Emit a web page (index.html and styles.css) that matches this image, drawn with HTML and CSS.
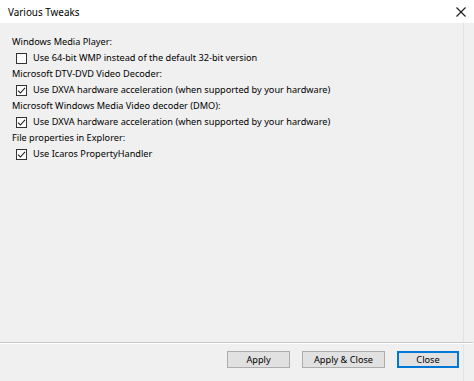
FILE: index.html
```html
<!DOCTYPE html>
<html>
<head>
<meta charset="utf-8">
<link rel="stylesheet" href="styles.css">
</head>
<body>
<div class="window">
  <div class="titlebar">
    <span class="title">Various Tweaks</span>
    <svg class="close-x" width="10" height="10" viewBox="0 0 10 10"><path d="M0.5 0.5 L9.5 9.5 M9.5 0.5 L0.5 9.5" stroke="#1a1a1a" stroke-width="1.1" fill="none"/></svg>
  </div>
  <div class="body">
    <div class="content">
      <div class="group-label">Windows Media Player:</div>
      <div class="check-row"><span class="box"></span><span>Use 64-bit WMP instead of the default 32-bit version</span></div>
      <div class="group-label">Microsoft DTV-DVD Video Decoder:</div>
      <div class="check-row"><span class="box checked"><svg width="9" height="9" viewBox="0 0 9 9"><path d="M1 4.6 L3.4 7 L8 1.8" stroke="#222" stroke-width="1.1" fill="none"/></svg></span><span>Use DXVA hardware acceleration (when supported by your hardware)</span></div>
      <div class="group-label">Microsoft Windows Media Video decoder (DMO):</div>
      <div class="check-row"><span class="box checked"><svg width="9" height="9" viewBox="0 0 9 9"><path d="M1 4.6 L3.4 7 L8 1.8" stroke="#222" stroke-width="1.1" fill="none"/></svg></span><span>Use DXVA hardware acceleration (when supported by your hardware)</span></div>
      <div class="group-label">File properties in Explorer:</div>
      <div class="check-row"><span class="box checked"><svg width="9" height="9" viewBox="0 0 9 9"><path d="M1 4.6 L3.4 7 L8 1.8" stroke="#222" stroke-width="1.1" fill="none"/></svg></span><span>Use Icaros PropertyHandler</span></div>
    </div>
    <div class="footer">
      <button class="btn btn-apply">Apply</button>
      <button class="btn btn-applyclose">Apply &amp; Close</button>
      <button class="btn btn-close default">Close</button>
    </div>
  </div>
</div>
</body>
</html>
```

FILE: styles.css
```css
html, body {
  margin: 0;
  padding: 0;
  height: 100%;
}
body {
  background: #f0f0f0;
  font-family: "Noto Sans", "Open Sans", sans-serif;
  font-size: 9.2px;
  color: #000;
}
.window {
  display: flex;
  flex-direction: column;
  height: 381px;
}
.titlebar {
  height: 23px;
  background: #fff;
  display: flex;
  align-items: center;
  justify-content: space-between;
  padding: 0 8px 0 8px;
  flex: none;
}
.title {
  font-size: 9.9px;
  color: #000;
}
.body {
  flex: 1;
  display: flex;
  flex-direction: column;
  border-right: 1px solid #e4e4e4;
  margin-right: 10px;
}
.content {
  flex: 1;
  padding: 11px 0 0 12px;
}
.group-label {
  height: 16px;
  line-height: 16px;
}
.check-row {
  height: 16px;
  line-height: 16px;
  display: flex;
  align-items: center;
  padding-left: 4px;
}
.box {
  width: 11px;
  height: 11px;
  border: 1px solid #333;
  background: #fff;
  box-sizing: border-box;
  margin-right: 6px;
  display: flex;
  align-items: center;
  justify-content: center;
  flex: none;
}
.box svg { display: block; }
.footer {
  flex: none;
  height: 39px;
  border-top: 1px solid #c8c8c8;
  box-shadow: inset 0 1px 0 #ffffff;
  display: flex;
  justify-content: flex-end;
  align-items: flex-start;
  padding-top: 8px;
  box-sizing: border-box;
  gap: 12px;
  margin-right: -10px;
  padding-right: 14px;
}
.btn {
  height: 17px;
  font-family: inherit;
  font-size: 9.2px;
  background: #e1e1e1;
  border: 1px solid #adadad;
  padding: 0;
  color: #000;
  line-height: 14px;
}
.btn-apply { width: 63px; }
.btn-applyclose { width: 83px; }
.btn-close { width: 62px; }
.btn.default {
  border: 1px solid #0078d7;
  box-shadow: inset 0 0 0 1px #0078d7;
}
```
